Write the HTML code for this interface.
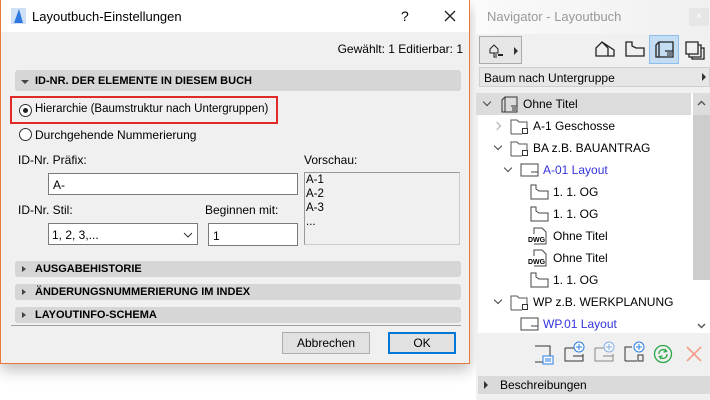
<!DOCTYPE html>
<html><head><meta charset="utf-8"><style>
*{box-sizing:border-box;margin:0;padding:0}
body{width:710px;height:400px;background:#fff;position:relative;overflow:hidden;font-family:"Liberation Sans",sans-serif;font-size:12px;color:#000}
.a{position:absolute;white-space:nowrap}
.dlg{position:absolute;left:0;top:0;width:470px;height:364px;border:1px solid #e8793a;border-top:none;background:#f0f0f0;box-shadow:0 6px 14px rgba(0,0,0,.25)}
.bar{position:absolute;left:14px;width:446px;background:#d6d6d6;border-radius:3px;font-weight:bold;font-size:11px}
.bar span{position:absolute;left:20px;top:50%;transform:translateY(-50%)}
.tri{position:absolute;left:7px;top:50%;transform:translateY(-50%);width:0;height:0;border-top:3px solid transparent;border-bottom:3px solid transparent;border-left:4px solid #444}
.trid{position:absolute;left:6px;top:50%;margin-top:-1px;width:0;height:0;border-left:4px solid transparent;border-right:4px solid transparent;border-top:4px solid #444}
.inp{position:absolute;background:#fff;border:1px solid #7a7a7a}
.radio{position:absolute;width:13px;height:13px;border:1px solid #333;border-radius:50%;background:#fff}
.nav{position:absolute;left:476px;top:0;width:234px;height:400px;background:#f0f0f0}
.row{position:absolute;left:0;width:215px;height:22px}
.row span{position:absolute;top:4px}
.chev{position:absolute;top:6px;width:6px;height:6px;border-right:1.5px solid #444;border-bottom:1.5px solid #444;transform:rotate(45deg)}
.chr{position:absolute;top:8px;width:6px;height:6px;border-right:1.5px solid #aaa;border-bottom:1.5px solid #aaa;transform:rotate(-45deg)}
</style></head><body>
<div class="dlg">
 <div class="a" style="left:0;top:0;width:468px;height:32px;background:#fff"></div>
 <svg class="a" style="left:10px;top:8px" width="15" height="16"><rect width="15" height="16" fill="#cfe0f7"/><path d="M3 15 L8 1 L12 15 Z" fill="#2f7ae0"/></svg>
 <div class="a" style="left:31px;top:9px;font-size:13px">Layoutbuch-Einstellungen</div>
 <div class="a" style="left:400px;top:8px;font-size:14px">?</div>
 <svg class="a" style="left:443px;top:10px" width="12" height="12"><path d="M1 1L11 11M11 1L1 11" stroke="#222" stroke-width="1.3"/></svg>
 <div class="a" style="right:6px;top:42px">Gewählt: 1 Editierbar: 1</div>
 <div class="bar" style="top:70px;height:21px"><i class="trid"></i><span>ID-NR. DER ELEMENTE IN DIESEM BUCH</span></div>
 <div class="a" style="left:9px;top:96px;width:268px;height:28px;border:2px solid #e02a2a"></div>
 <div class="radio" style="left:18px;top:104px"><div style="position:absolute;left:3px;top:3px;width:5px;height:5px;border-radius:50%;background:#222"></div></div>
 <div class="a" style="left:34px;top:103px;font-size:11.5px">Hierarchie (Baumstruktur nach Untergruppen)</div>
 <div class="radio" style="left:18px;top:128px"></div>
 <div class="a" style="left:34px;top:128px">Durchgehende Nummerierung</div>
 <div class="a" style="left:17px;top:153px">ID-Nr. Präfix:</div>
 <div class="inp" style="left:47px;top:173px;width:250px;height:22px"><span class="a" style="left:4px;top:4px">A-</span></div>
 <div class="a" style="left:303px;top:153px">Vorschau:</div>
 <div class="a" style="left:303px;top:172px;width:156px;height:73px;border:1px solid #ccc;border-left-color:#999;border-top-color:#999;background:#f0f0f0;line-height:14px;padding-left:1px;font-size:11.5px">A-1<br>A-2<br>A-3<br>...</div>
 <div class="a" style="left:17px;top:203px">ID-Nr. Stil:</div>
 <div class="inp" style="left:47px;top:223px;width:150px;height:22px"><span class="a" style="left:3px;top:4px">1, 2, 3,...</span><svg class="a" style="left:134px;top:8px" width="10" height="6"><path d="M1 1L5 5L9 1" stroke="#333" fill="none"/></svg></div>
 <div class="a" style="left:204px;top:203px">Beginnen mit:</div>
 <div class="inp" style="left:207px;top:223px;width:90px;height:23px"><span class="a" style="left:4px;top:5px">1</span></div>
 <div class="bar" style="top:261px;height:16px"><i class="tri"></i><span>AUSGABEHISTORIE</span></div>
 <div class="bar" style="top:284px;height:16px"><i class="tri"></i><span>ÄNDERUNGSNUMMERIERUNG IM INDEX</span></div>
 <div class="bar" style="top:307px;height:16px"><i class="tri"></i><span>LAYOUTINFO-SCHEMA</span></div>
 <div class="a" style="left:10px;top:325px;width:450px;height:1px;background:#a0a0a0"></div>
 <div class="a" style="left:281px;top:332px;width:88px;height:22px;border:1px solid #adadad;background:#e1e1e1;text-align:center;line-height:20px">Abbrechen</div>
 <div class="a" style="left:387px;top:332px;width:68px;height:22px;border:2px solid #0078d7;background:#e1e1e1;text-align:center;line-height:18px">OK</div>
</div>
<div class="nav">
 <div class="a" style="left:0;top:0;width:234px;height:34px;background:linear-gradient(90deg,#fafafa,#f0f0f0)"></div>
 <div class="a" style="left:11px;top:9px;color:#999;font-size:13px">Navigator - Layoutbuch</div>
 <div class="a" style="left:213px;top:8px;width:20px;height:18px;background:#e6e6e6;color:#fff;text-align:center;font-size:10px;line-height:18px">×</div>
 <div class="a" style="left:3px;top:36px;width:43px;height:28px;border:1px solid #aaa;background:#e6e6e6">
  <svg class="a" style="left:8px;top:5px" width="16" height="16"><path d="M2 7L6 3L10 7V11H2Z M6 11V15H9M7 13H9" fill="none" stroke="#222"/><rect x="10" y="12" width="5" height="2" fill="#222"/></svg>
  <div class="a" style="left:34px;top:10px;border-top:4px solid transparent;border-bottom:4px solid transparent;border-left:4px solid #333"></div></div>
 <svg class="a" style="left:119px;top:40px" width="20" height="18"><path d="M1 16V8L7 2L13 8V16ZM7 2L19 10V16H13" fill="none" stroke="#222" stroke-width="1.3"/></svg>
 <svg class="a" style="left:149px;top:40px" width="20" height="18"><path d="M1 16V2H7V6L11 8H19V16Z" fill="none" stroke="#222" stroke-width="1.3"/></svg>
 <div class="a" style="left:173px;top:35px;width:30px;height:29px;background:#c4ddf3;border:1px solid #8cc0ea"></div>
 <svg class="a" style="left:178px;top:40px" width="20" height="19"><path d="M2 17V5L5 2H19V17ZM5 2V17M11 11H19" fill="none" stroke="#222" stroke-width="1.3"/><path d="M13 13h5M13 15h5" stroke="#222"/></svg>
 <svg class="a" style="left:209px;top:40px" width="20" height="20"><path d="M1 2H13V14H1ZM4 14V17H16V5H13M7 17V19H19V8H16" fill="none" stroke="#222" stroke-width="1.3"/></svg>
 <div class="a" style="left:3px;top:67px;width:231px;height:20px;background:#e6e6e6;border:1px solid #d0d0d0"><span class="a" style="left:4px;top:3px">Baum nach Untergruppe</span><div class="a" style="left:222px;top:5px;border-top:4px solid transparent;border-bottom:4px solid transparent;border-left:4px solid #333"></div></div>
 <div class="a" style="left:2px;top:93px;width:215px;height:240px;background:#fff"></div>
 <div class="a" style="left:217px;top:93px;width:17px;height:240px;background:#fff"></div>
 <div class="a" style="left:217px;top:93px;width:17px;height:22px;background:#dcdcdc"></div>
 <div class="a" style="left:217px;top:115px;width:17px;height:165px;background:#cdcdcd"></div>
 <svg class="a" style="left:221px;top:100px" width="9" height="6"><path d="M1 5L4.5 1.5L8 5" stroke="#555" fill="none" stroke-width="1.4"/></svg>
 <svg class="a" style="left:221px;top:323px" width="9" height="6"><path d="M1 1L4.5 4.5L8 1" stroke="#555" fill="none" stroke-width="1.4"/></svg>
 <div class="row" style="top:93px;background:#dcdcdc"><i class="chev" style="left:8px"></i>
  <svg class="a" style="left:24px;top:3px" width="18" height="17"><path d="M2 16V4L5 1H17V16ZM5 1V16M11 10H17" fill="none" stroke="#333"/><path d="M12 12h4M12 14h4" stroke="#333"/></svg><span style="left:47px">Ohne Titel</span></div>
 <div class="row" style="top:115px"><i class="chr" style="left:18px"></i>
  <svg class="a" style="left:34px;top:3px" width="20" height="17"><path d="M1 16V2H7L9 4H17V10M1 16H12" fill="none" stroke="#555"/><rect x="12.5" y="10.5" width="5" height="5" fill="none" stroke="#333"/></svg><span style="left:57px">A-1 Geschosse</span></div>
 <div class="row" style="top:137px"><i class="chev" style="left:19px"></i>
  <svg class="a" style="left:34px;top:3px" width="20" height="17"><path d="M1 16V2H7L9 4H17V10M1 16H12" fill="none" stroke="#555"/><rect x="12.5" y="10.5" width="5" height="5" fill="none" stroke="#333"/></svg><span style="left:57px">BA z.B. BAUANTRAG</span></div>
 <div class="row" style="top:159px"><i class="chev" style="left:29px"></i>
  <svg class="a" style="left:44px;top:4px" width="20" height="15"><path d="M1 1H18V13H1ZM11 9H18V13" fill="none" stroke="#444"/></svg><span style="left:67px;color:#3333dd">A-01 Layout</span></div>
 <div class="row" style="top:181px"><svg class="a" style="left:54px;top:3px" width="20" height="16"><path d="M1 15V1H6V5L9 7H18V15Z" fill="none" stroke="#444"/></svg><span style="left:77px">1. 1. OG</span></div>
 <div class="row" style="top:203px"><svg class="a" style="left:54px;top:3px" width="20" height="16"><path d="M1 15V1H6V5L9 7H18V15Z" fill="none" stroke="#444"/></svg><span style="left:77px">1. 1. OG</span></div>
 <div class="row" style="top:225px"><svg class="a" style="left:52px;top:2px" width="22" height="18"><path d="M6 7V1H14L18 5V17H6" fill="none" stroke="#444"/><text x="0" y="15" font-size="7" font-family="Liberation Sans" font-weight="bold">DWG</text></svg><span style="left:77px">Ohne Titel</span></div>
 <div class="row" style="top:247px"><svg class="a" style="left:52px;top:2px" width="22" height="18"><path d="M6 7V1H14L18 5V17H6" fill="none" stroke="#444"/><text x="0" y="15" font-size="7" font-family="Liberation Sans" font-weight="bold">DWG</text></svg><span style="left:77px">Ohne Titel</span></div>
 <div class="row" style="top:269px"><svg class="a" style="left:54px;top:3px" width="20" height="16"><path d="M1 15V1H6V5L9 7H18V15Z" fill="none" stroke="#444"/></svg><span style="left:77px">1. 1. OG</span></div>
 <div class="row" style="top:291px"><i class="chev" style="left:19px"></i>
  <svg class="a" style="left:34px;top:3px" width="20" height="17"><path d="M1 16V2H7L9 4H17V10M1 16H12" fill="none" stroke="#555"/><rect x="12.5" y="10.5" width="5" height="5" fill="none" stroke="#333"/></svg><span style="left:57px">WP z.B. WERKPLANUNG</span></div>
 <div class="row" style="top:313px;height:20px"><svg class="a" style="left:44px;top:4px" width="20" height="15"><path d="M1 1H18V13H1ZM11 9H18V13" fill="none" stroke="#444"/></svg><span style="left:67px;color:#3333dd">WP.01 Layout</span></div>
 <svg class="a" style="left:58px;top:345px" width="20" height="20"><path d="M1 1H16V17H1" fill="none" stroke="#333"/><rect x="9" y="11" width="10" height="8" fill="#fff" stroke="#2a7de1"/><path d="M11 14h6M11 16h6" stroke="#2a7de1"/></svg>
 <svg class="a" style="left:88px;top:341px" width="22" height="22"><path d="M1 7H10M1 7V20H19V13M9 15H19" fill="none" stroke="#333"/><circle cx="15" cy="6" r="5" fill="#fff" stroke="#2a7de1"/><path d="M15 3V9M12 6H18" stroke="#2a7de1"/></svg>
 <svg class="a" style="left:118px;top:341px" width="22" height="22" opacity=".55"><path d="M1 7H10M1 7V20H19V13M9 15H19" fill="none" stroke="#333"/><circle cx="15" cy="6" r="5" fill="#fff" stroke="#2a7de1"/><path d="M15 3V9M12 6H18" stroke="#2a7de1"/></svg>
 <svg class="a" style="left:148px;top:341px" width="22" height="22"><path d="M1 20V6H8M1 20H13" fill="none" stroke="#333"/><rect x="14" y="14" width="5" height="6" fill="none" stroke="#333"/><circle cx="15" cy="6" r="5" fill="#fff" stroke="#2a7de1"/><path d="M15 3V9M12 6H18" stroke="#2a7de1"/></svg>
 <svg class="a" style="left:177px;top:344px" width="20" height="20"><circle cx="10" cy="10" r="8.5" fill="none" stroke="#2aa84a" stroke-width="1.3"/><path d="M6 10A4 4 0 0 1 13 7M14 10A4 4 0 0 1 7 13M12 5L13.5 7.5L10.5 8M8 15L6.5 12.5L9.5 12" fill="none" stroke="#2aa84a" stroke-width="1.3"/></svg>
 <svg class="a" style="left:210px;top:346px" width="16" height="16"><path d="M1 1L15 15M15 1L1 15" stroke="#f4a08c" stroke-width="1.8"/></svg>
 <div class="a" style="left:2px;top:376px;width:232px;height:18px;background:#dadada"><div class="a" style="left:6px;top:5px;border-top:4px solid transparent;border-bottom:4px solid transparent;border-left:4px solid #333"></div><span class="a" style="left:22px;top:2px">Beschreibungen</span></div>
</div>
</body></html>
